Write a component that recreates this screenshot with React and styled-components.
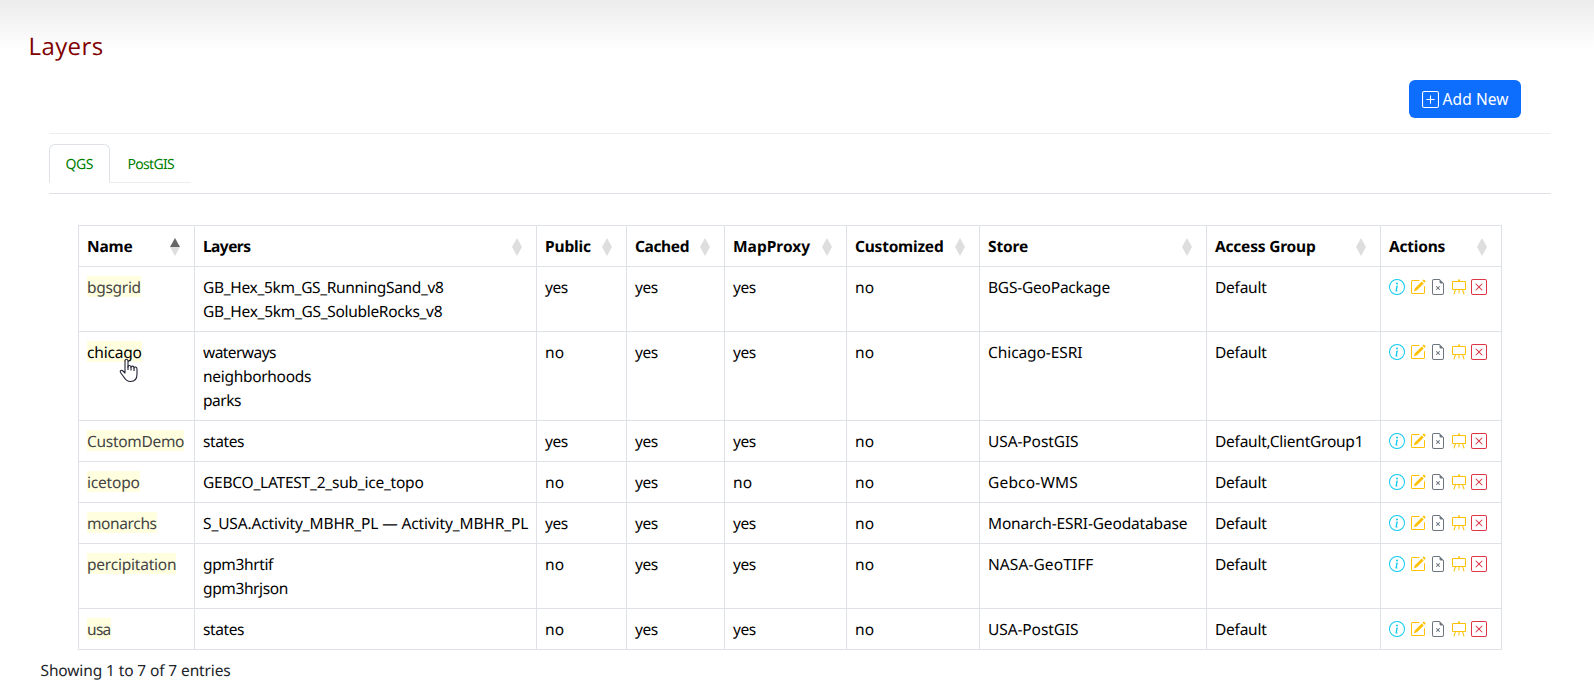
import React from "react";
import styled, { createGlobalStyle } from "styled-components";
import { BsPlusSquare, BsInfoCircle, BsPencilSquare, BsFileEarmarkX, BsEasel, BsXSquare } from "react-icons/bs";

const GlobalStyle = createGlobalStyle`
  *, *::before, *::after { box-sizing: border-box; }
  body {
    margin: 0;
    height: 697px;
    overflow: hidden;
    font: 15.5px/24px "Segoe UI", "Noto Sans", "Open Sans", sans-serif;
    color: #212529;
    background: #fff linear-gradient(#ececec, #fff 50px) no-repeat;
    text-rendering: geometricPrecision;
  }
`;

const Page = styled.main`
  display: flex;
  flex-direction: column;
  padding-top: 29px;
`;

const Title = styled.h1`
  margin: 0 0 0 28.5px;
  font: 400 24px/36px "Trebuchet MS", "Open Sans", sans-serif;
  letter-spacing: 0.4px;
  color: #800000;
`;

const Toolbar = styled.div`
  display: flex;
  justify-content: flex-end;
  margin: 0 43px 0 49px;
  padding: 15px 30px 15px 0;
  border-bottom: 1px solid #ededed;
`;

const AddButton = styled.button`
  display: flex;
  align-items: center;
  gap: 3.5px;
  width: 112px;
  height: 38px;
  padding: 0 0 0 13px;
  border: 0;
  border-radius: 6px;
  background: #0d6efd;
  color: #fff;
  font: inherit;
  white-space: nowrap;
`;

const TabBar = styled.div`
  display: flex;
  margin: 0 43px 0 49px;
  padding: 10px 0;
  border-bottom: 1px solid #dee2e6;
`;

const Tab = styled.a`
  width: ${(p) => p.$width}px;
  height: 39px;
  padding: 8px 0 0 ${(p) => (p.$active ? 15.5 : 17.5)}px;
  border: 1px solid transparent;
  border-bottom-color: ${(p) => (p.$active ? "transparent" : "#ededed")};
  ${(p) => p.$active && "border-color: #dee2e6 #dee2e6 transparent; border-radius: 6px 6px 0 0;"}
  ${(p) => !p.$active && "border-left: 0; border-right: 0;"}
  color: #008000;
  font-size: 14px;
  line-height: 23px;
`;

const Table = styled.table`
  width: 1423px;
  margin: 31px 0 0 78px;
  table-layout: fixed;
  border-collapse: collapse;
  color: #000;
`;

const HeadCell = styled.th`
  padding: 8px;
  border: 1px solid #dee2e6;
  font-weight: 700;
  text-align: left;
`;

const HeadContent = styled.div`
  display: flex;
  align-items: flex-start;
  justify-content: space-between;
  height: 24px;
  padding-right: 6px;

  svg { margin-top: 4px; }
`;

const Cell = styled.td`
  height: 41px;
  padding: 8px;
  border: 1px solid #dee2e6;
  vertical-align: top;
  white-space: nowrap;
`;

const Label = styled.span`
  letter-spacing: ${(p) => p.$track || 0}px;
`;

const Line = styled.div`
  height: 24px;
`;

const NameLink = styled.a`
  position: relative;
  display: inline-block;
  height: 21px;
  margin-top: 1px;
  line-height: 22px;
  background: #ffffe0;
  color: ${(p) => (p.$hover ? "#000" : "#444")};
`;

const Hand = styled.svg`
  position: absolute;
  left: 32px;
  top: 17px;
`;

const Actions = styled.div`
  display: flex;
  gap: 4.5px;
  padding-top: 4px;
`;

const Footer = styled.footer`
  margin: 8px 0 0 40.5px;
`;

const columns = [
  ["Name", 116, -0.2], ["Layers", 342, -0.55], ["Public", 90, -0.15], ["Cached", 98, -0.37],
  ["MapProxy", 122, 0], ["Customized", 133, -0.22], ["Store", 227, -0.12],
  ["Access Group", 174, -0.2], ["Actions", 121, -0.22],
];

const rows = [
  ["bgsgrid", ["GB_Hex_5km_GS_RunningSand_v8", "GB_Hex_5km_GS_SolubleRocks_v8"], "yes", "yes", "yes", "no", "BGS-GeoPackage", "Default"],
  ["chicago", ["waterways", "neighborhoods", "parks"], "no", "yes", "yes", "no", "Chicago-ESRI", "Default"],
  ["CustomDemo", ["states"], "yes", "yes", "yes", "no", "USA-PostGIS", "Default,ClientGroup1"],
  ["icetopo", ["GEBCO_LATEST_2_sub_ice_topo"], "no", "yes", "no", "no", "Gebco-WMS", "Default"],
  ["monarchs", ["S_USA.Activity_MBHR_PL — Activity_MBHR_PL"], "yes", "yes", "yes", "no", "Monarch-ESRI-Geodatabase", "Default"],
  ["percipitation", ["gpm3hrtif", "gpm3hrjson"], "no", "yes", "yes", "no", "NASA-GeoTIFF", "Default"],
  ["usa", ["states"], "no", "yes", "yes", "no", "USA-PostGIS", "Default"],
];

const tracking = {
  GB_Hex_5km_GS_RunningSand_v8: -0.33,
  GB_Hex_5km_GS_SolubleRocks_v8: -0.3,
  waterways: -0.55,
  neighborhoods: -0.3,
  parks: -0.5,
  states: -0.42,
  GEBCO_LATEST_2_sub_ice_topo: -0.23,
  "S_USA.Activity_MBHR_PL — Activity_MBHR_PL": -0.13,
  gpm3hrtif: -0.37,
  gpm3hrjson: -0.38,
  bgsgrid: -0.3,
  chicago: -0.18,
  CustomDemo: -0.3,
  icetopo: -0.2,
  monarchs: -0.38,
  percipitation: -0.22,
  usa: -0.7,
  yes: -0.4,
  no: 0.1,
  "BGS-GeoPackage": -0.22,
  "Chicago-ESRI": -0.08,
  "USA-PostGIS": -0.1,
  "Gebco-WMS": 0.18,
  "Monarch-ESRI-Geodatabase": -0.16,
  "NASA-GeoTIFF": 0.08,
  Default: -0.25,
  "Default,ClientGroup1": -0.24,
};

function Value({ children }) {
  return <Label $track={tracking[children]}>{children}</Label>;
}

function SortMark({ ascending }) {
  return (
    <svg width="10" height="18" viewBox="0 0 10 18">
      <path d="M0 9L5 0L10 9Z" fill={ascending ? "#666" : "#dedede"} />
      <path d="M0 9L5 18L10 9Z" fill="#dedede" />
    </svg>
  );
}

function HandPointer() {
  return (
    <Hand width="20" height="25" viewBox="0 0 20 25">
      <path
        d="M6 15V3.2C6 .5 9 .5 9 3.2V9C9 7 12 7 12 9.3C12 7.5 15 7.7 15 10C15 8.5 18 8.7 18 11V16C18 20 16 23.5 11.5 23.5C8 23.5 6.5 22 4.8 19L1.5 14.5C.5 12.5 2.6 11.6 4 13Z"
        fill="#fff" stroke="#223" strokeWidth="1.1" strokeLinejoin="round"
      />
      <path d="M9 8V12M12 9V12.5M15 10V13" stroke="#223" strokeWidth="1.1" fill="none" />
    </Hand>
  );
}

export default function App() {
  return (
    <>
      <GlobalStyle />
      <Page>
        <Title>Layers</Title>
        <Toolbar>
          <AddButton><BsPlusSquare size={17} /><Label $track={0.1}>Add New</Label></AddButton>
        </Toolbar>
        <TabBar>
          <Tab $active $width={61}><Label $track={-0.4}>QGS</Label></Tab>
          <Tab $width={81}><Label $track={-0.68}>PostGIS</Label></Tab>
        </TabBar>
        <Table>
          <colgroup>{columns.map(([n, w]) => <col key={n} width={w} />)}</colgroup>
          <thead>
            <tr>
              {columns.map(([n, , track], i) => (
                <HeadCell key={n}>
                  <HeadContent><Label $track={track}>{n}</Label><SortMark ascending={i === 0} /></HeadContent>
                </HeadCell>
              ))}
            </tr>
          </thead>
          <tbody>
            {rows.map(([name, layers, ...rest]) => (
              <tr key={name}>
                <Cell>
                  <NameLink $hover={name === "chicago"}>
                    <Value>{name}</Value>
                    {name === "chicago" && <HandPointer />}
                  </NameLink>
                </Cell>
                <Cell>{layers.map((l) => <Line key={l}><Value>{l}</Value></Line>)}</Cell>
                {rest.map((value, i) => <Cell key={i}><Value>{value}</Value></Cell>)}
                <Cell>
                  <Actions>
                    <BsInfoCircle size={16} color="#0dcaf0" />
                    <BsPencilSquare size={16} color="#ffc107" />
                    <BsFileEarmarkX size={16} color="#6c757d" />
                    <BsEasel size={16} color="#ffc107" />
                    <BsXSquare size={16} color="#dc3545" />
                  </Actions>
                </Cell>
              </tr>
            ))}
          </tbody>
        </Table>
        <Footer><Label $track={-0.12}>Showing 1 to 7 of 7 entries</Label></Footer>
      </Page>
    </>
  );
}
